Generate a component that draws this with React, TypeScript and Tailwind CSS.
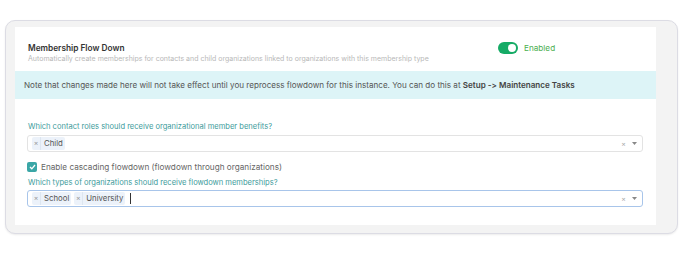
import React from 'react';

const font = { fontFamily: '"Inter", "Liberation Sans", sans-serif' };

const Chip: React.FC<{ label: string }> = ({ label }) => (
  <span className="flex h-[13px] items-center rounded-[2px] bg-[#ecf2fa] text-[7.8px] text-[#555]">
    <span className="flex h-full w-[9px] items-center justify-center border-r border-[#dde6f0] text-[7px] text-[#999]">×</span>
    <span className="pl-[3px] pr-[2px]">{label}</span>
  </span>
);

const Select: React.FC<{ chips: string[]; focused?: boolean }> = ({ chips, focused }) => (
  <div
    className={`flex h-[17px] items-center rounded-[3px] border bg-white pl-[4px] pr-[5px] ${
      focused ? 'border-[#a8c5ea]' : 'border-[#e3e3e3]'
    }`}
  >
    <div className="flex flex-1 items-center gap-[3px]">
      {chips.map((c) => (
        <Chip key={c} label={c} />
      ))}
      {focused && <span className="ml-[2px] h-[11px] w-px bg-[#333]" />}
    </div>
    <span className="mr-[6px] text-[7px] leading-none text-[#aaa]">×</span>
    <svg width="5" height="3" viewBox="0 0 5 3">
      <path d="M0 0h5L2.5 3z" fill="#888" />
    </svg>
  </div>
);

export default function App() {
  return (
    <div className="h-[258px] w-[681px] bg-white pt-[20px] pl-[5px]" style={font}>
      <div className="h-[214px] w-[673px] rounded-[10px] border border-[#dcdce4] bg-[#f3f3f3] pt-[6px] pr-[21px] pb-[8px] pl-[9px] shadow-[0_1px_2px_rgba(0,0,0,0.08)]">
        <div className="flex h-full flex-col bg-white pt-[15px]">
          <div className="flex h-[22px] px-[13px]">
            <div className="w-[470px]">
              <div className="text-[8.3px] font-semibold leading-[12px] text-[#333]">Membership Flow Down</div>
              <div className="text-[7px] leading-[10px] text-[#b8b8b8]">
                Automatically create memberships for contacts and child organizations linked to organizations with this membership type
              </div>
            </div>
            <div className="flex items-start gap-[6px]">
              <span className="relative h-[12px] w-[20px] rounded-full bg-[#16ab66]">
                <span className="absolute right-[2px] top-[2px] h-[8px] w-[8px] rounded-full bg-white" />
              </span>
              <span className="text-[8.2px] leading-[12px] text-[#4caf50]">Enabled</span>
            </div>
          </div>

          <div className="mt-[7px] flex h-[28px] items-center bg-[#ddf4f7] px-[9px] text-[8.1px] text-[#555] [font-feature-settings:'calt'_0]">
            <span>
              Note that changes made here will not take effect until you reprocess flowdown for this instance. You can do this at{' '}
              <b className="font-semibold text-[#444]">Setup -&gt; Maintenance Tasks</b>
            </span>
          </div>

          <div className="flex flex-col pl-[12px] pr-[13px] pt-[23px]">
            <div className="pl-[1px] text-[7.55px] leading-[10px] text-[#3d9b9b]">
              Which contact roles should receive organizational member benefits?
            </div>
            <div className="mt-[3px]">
              <Select chips={['Child']} />
            </div>
            <div className="mt-[10px] flex h-[10px] items-center gap-[4px]">
              <span className="flex h-[10px] w-[10px] items-center justify-center rounded-[2px] bg-[#3aa6a6]">
                <svg width="7" height="6" viewBox="0 0 7 6">
                  <path d="M1 3l1.8 1.8L6 1" stroke="white" strokeWidth="1.3" fill="none" />
                </svg>
              </span>
              <span className="text-[8.2px] leading-[10px] text-[#666]">Enable cascading flowdown (flowdown through organizations)</span>
            </div>
            <div className="mt-[6px] pl-[1px] text-[7.55px] leading-[10px] text-[#3d9b9b]">
              Which types of organizations should receive flowdown memberships?
            </div>
            <div className="mt-[2px]">
              <Select chips={['School', 'University']} focused />
            </div>
          </div>
        </div>
      </div>
    </div>
  );
}
